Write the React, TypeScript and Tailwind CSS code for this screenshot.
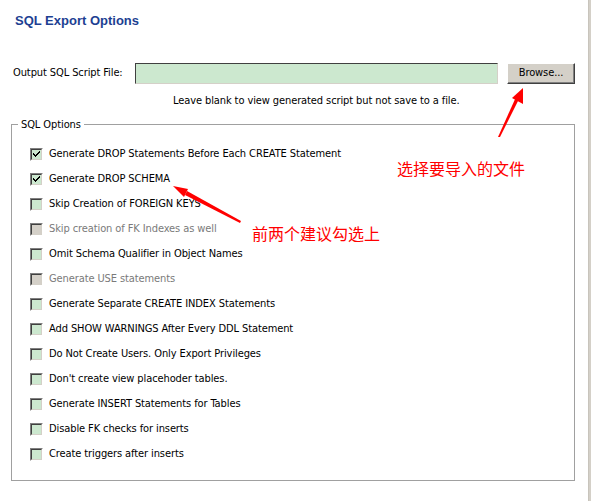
const options = [
  { label: "Generate DROP Statements Before Each CREATE Statement", checked: true },
  { label: "Generate DROP SCHEMA", checked: true },
  { label: "Skip Creation of FOREIGN KEYS" },
  { label: "Skip creation of FK Indexes as well", disabled: true },
  { label: "Omit Schema Qualifier in Object Names" },
  { label: "Generate USE statements", disabled: true },
  { label: "Generate Separate CREATE INDEX Statements" },
  { label: "Add SHOW WARNINGS After Every DDL Statement" },
  { label: "Do Not Create Users. Only Export Privileges" },
  { label: "Don't create view placehoder tables." },
  { label: "Generate INSERT Statements for Tables" },
  { label: "Disable FK checks for inserts" },
  { label: "Create triggers after inserts" },
];

const ui = { fontFamily: '"DejaVu Sans Condensed", "Liberation Sans", sans-serif' };
const cjk = { fontFamily: '"Noto Sans CJK SC", sans-serif' };

function CheckBox({ checked, disabled }: { checked?: boolean; disabled?: boolean }) {
  return (
    <span className="flex h-[13px] w-[13px] shrink-0 border-t border-l border-[#808080] border-r border-b border-r-white border-b-white">
      <span
        className={`flex h-full w-full items-center justify-center border-t border-l border-[#404040] border-r border-b border-r-[#d4d0c8] border-b-[#d4d0c8] ${
          disabled ? "bg-[#d4d0c8]" : "bg-[#cce8cf]"
        }`}
      >
        {checked && (
          <svg width="7" height="7" viewBox="0 0 7 7">
            <path d="M0 2h1v1h1v1h1V3h1V2h1V1h1V0h1v2H6v1H5v1H4v1H3v1H2V5H1V4H0z" fill="#000" />
          </svg>
        )}
      </span>
    </span>
  );
}

export default function App() {
  return (
    <div className="relative flex h-[501px] w-[591px] overflow-hidden bg-white text-[11px] tracking-[-0.1px] text-black" style={ui}>
      <div className="flex flex-1 flex-col">
        <h1 className="pl-[15px] pt-[13px] text-[13px] font-bold leading-[16px] tracking-normal text-[#1d3f92]" style={{ fontFamily: '"Liberation Sans", Arial, sans-serif' }}>
          SQL Export Options
        </h1>

        <div className="mt-[34px] flex h-[21px] items-center pl-[13px]">
          <span className="w-[122px]">Output SQL Script File:</span>
          <div className="h-[21px] w-[363px] border-t border-l border-[#404040] border-r border-b border-r-[#d4d0c8] border-b-[#d4d0c8] bg-[#cce8cf]" />
          <button className="ml-[9px] flex h-[21px] w-[68px] items-center justify-center border-t border-l border-white border-r border-b border-r-[#404040] border-b-[#404040] bg-[#d4d0c8] shadow-[inset_-1px_-1px_0_#808080]">
            Browse...
          </button>
        </div>

        <p className="mt-[10px] pl-[173px] leading-[13px]">
          Leave blank to view generated script but not save to a file.
        </p>

        <fieldset className="ml-[11px] mt-[11px] w-[564px] border border-[#a0a0a0] pb-[13px] pt-[11px]">
          <legend className="ml-[6px] px-[3px] leading-[13px]">SQL Options</legend>
          {options.map((o) => (
            <div key={o.label} className="flex h-[25px] items-center gap-[6px] pl-[18px]">
              <CheckBox checked={o.checked} disabled={o.disabled} />
              <span className={o.disabled ? "text-[#7a7a7a]" : ""}>{o.label}</span>
            </div>
          ))}
        </fieldset>
      </div>

      <div className="w-[3px] border-l border-[#c8c4bc] bg-[#d4d0c8]" />

      <svg className="pointer-events-none absolute left-0 top-0" width="591" height="501">
        <g fill="#ff0000">
          <polygon points="498,137 500,137 519,99 516,97" />
          <polygon points="523,88 512,98 523,104" />
          <polygon points="240,223 241,221 187,191 185,195" />
          <polygon points="173,186 188,189 184,197" />
        </g>
      </svg>

      <span className="absolute left-[397px] top-[158px] text-[16px] leading-[20px] tracking-normal text-[#ff0000]" style={cjk}>
        选择要导入的文件
      </span>
      <span className="absolute left-[252px] top-[223px] text-[16px] leading-[20px] tracking-normal text-[#ff0000]" style={cjk}>
        前两个建议勾选上
      </span>
    </div>
  );
}
